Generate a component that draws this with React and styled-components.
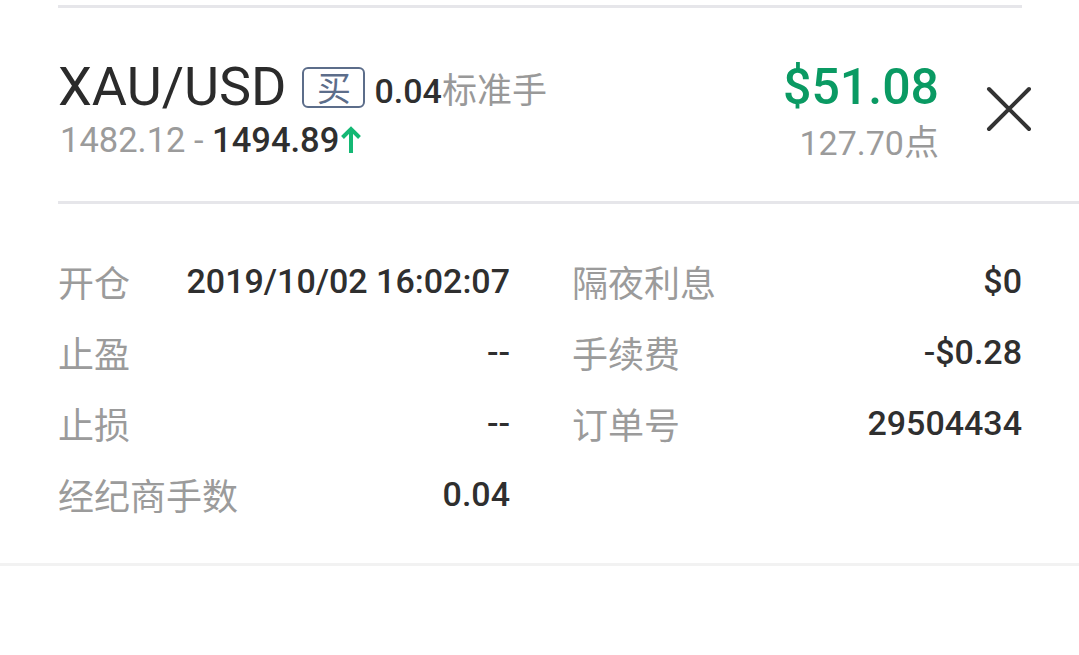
import styled, { createGlobalStyle } from "styled-components";

const GlobalStyle = createGlobalStyle`
  html, body {
    margin: 0;
    padding: 0;
    background: #fff;
  }
  body {
    font-family: Roboto, "Noto Sans CJK SC", sans-serif;
    color: #2f2f2f;
  }
`;

const Page = styled.div`
  width: 1079px;
  background: #fff;
`;

const TopRule = styled.div`
  margin: 5px 57px 0 58px;
  height: 3px;
  background: #e6e6ea;
`;

const Header = styled.div`
  display: flex;
  align-items: center;
  padding: 49px 47px 41px 58px;
`;

const SymbolBlock = styled.div`
  display: flex;
  flex-direction: column;
`;

const TitleRow = styled.div`
  display: flex;
  align-items: center;
  height: 60px;
`;

const Symbol = styled.span`
  font-size: 54px;
  font-weight: 400;
  color: #2b2b2b;
  line-height: 60px;
`;

const SideBadge = styled.span`
  display: flex;
  align-items: center;
  justify-content: center;
  box-sizing: border-box;
  width: 63px;
  height: 41px;
  margin-left: 16px;
  border: 2.5px solid #5c6d8a;
  border-radius: 6px;
  font-family: "Noto Sans CJK SC", sans-serif;
  font-size: 34px;
  line-height: 1;
  color: #5c6d8a;
`;

const Lots = styled.span`
  margin-left: 9px;
  font-size: 34px;
  font-weight: 500;
  color: #2f2f2f;
`;

const LotsUnit = styled.span`
  font-family: "Noto Sans CJK SC", sans-serif;
  font-size: 35px;
  font-weight: 400;
  color: #999;
`;

const SubRow = styled.div`
  display: flex;
  align-items: center;
  height: 40px;
  margin-top: 3px;
  font-size: 34.5px;
  padding-left: 2px;
`;

const Price = styled.span`
  color: ${(p) => (p.dim ? "#9b9b9b" : "#2f2f2f")};
  font-weight: ${(p) => (p.dim ? 400 : 500)};
  white-space: pre;
`;

const PnlBlock = styled.div`
  margin-left: auto;
  display: flex;
  flex-direction: column;
  align-items: flex-end;
`;

const Pnl = styled.div`
  height: 60px;
  line-height: 60px;
  font-size: 50px;
  font-weight: 500;
  color: #0a9a63;
`;

const Points = styled.div`
  height: 40px;
  line-height: 40px;
  margin-top: 3px;
  font-size: 34px;
  color: #9b9b9b;
`;

const CloseButton = styled.button`
  display: flex;
  padding: 0;
  margin-left: 47px;
  border: none;
  background: none;
  width: 46px;
  height: 46px;
`;

const Divider = styled.div`
  margin-left: 58px;
  height: 3px;
  background: #e6e6ea;
`;

const Details = styled.div`
  display: grid;
  grid-template-columns: 452px 450px;
  column-gap: 62px;
  padding: 41px 57px 34px 58px;
`;

const Cell = styled.div`
  display: flex;
  align-items: center;
  justify-content: space-between;
  height: 71px;
`;

const Label = styled.span`
  font-family: "Noto Sans CJK SC", sans-serif;
  font-size: 36px;
  color: #9b9b9b;
`;

const Value = styled.span`
  font-size: 34px;
  font-weight: 500;
  color: #2f2f2f;
`;

const BottomRule = styled.div`
  height: 3px;
  background: #f2f2f2;
`;

const UpArrow = () => (
  <svg width="22" height="30" viewBox="0 0 22 30" style={{ marginLeft: 1 }}>
    <path d="M11 28V4M2.5 12.5L11 4l8.5 8.5" fill="none" stroke="#14b874" strokeWidth="4" />
  </svg>
);

const CloseIcon = () => (
  <svg width="46" height="46" viewBox="0 0 46 46">
    <path d="M3 3l40 40M43 3L3 43" stroke="#333" strokeWidth="4" strokeLinecap="round" />
  </svg>
);

const left = [
  ["开仓", "2019/10/02 16:02:07"],
  ["止盈", "--"],
  ["止损", "--"],
  ["经纪商手数", "0.04"],
];

const right = [
  ["隔夜利息", "$0"],
  ["手续费", "-$0.28"],
  ["订单号", "29504434"],
  null,
];

export default function App() {
  const rows = left.flatMap((l, i) => [l, right[i]]);
  return (
    <Page>
      <GlobalStyle />
      <TopRule />
      <Header>
        <SymbolBlock>
          <TitleRow>
            <Symbol>XAU/USD</Symbol>
            <SideBadge>买</SideBadge>
            <Lots>
              0.04<LotsUnit>标准手</LotsUnit>
            </Lots>
          </TitleRow>
          <SubRow>
            <Price dim>1482.12 - </Price>
            <Price>1494.89</Price>
            <UpArrow />
          </SubRow>
        </SymbolBlock>
        <PnlBlock>
          <Pnl>$51.08</Pnl>
          <Points>
            127.70<LotsUnit>点</LotsUnit>
          </Points>
        </PnlBlock>
        <CloseButton>
          <CloseIcon />
        </CloseButton>
      </Header>
      <Divider />
      <Details>
        {rows.map((r, i) =>
          r ? (
            <Cell key={i}>
              <Label>{r[0]}</Label>
              <Value>{r[1]}</Value>
            </Cell>
          ) : (
            <Cell key={i} />
          )
        )}
      </Details>
      <BottomRule />
    </Page>
  );
}
